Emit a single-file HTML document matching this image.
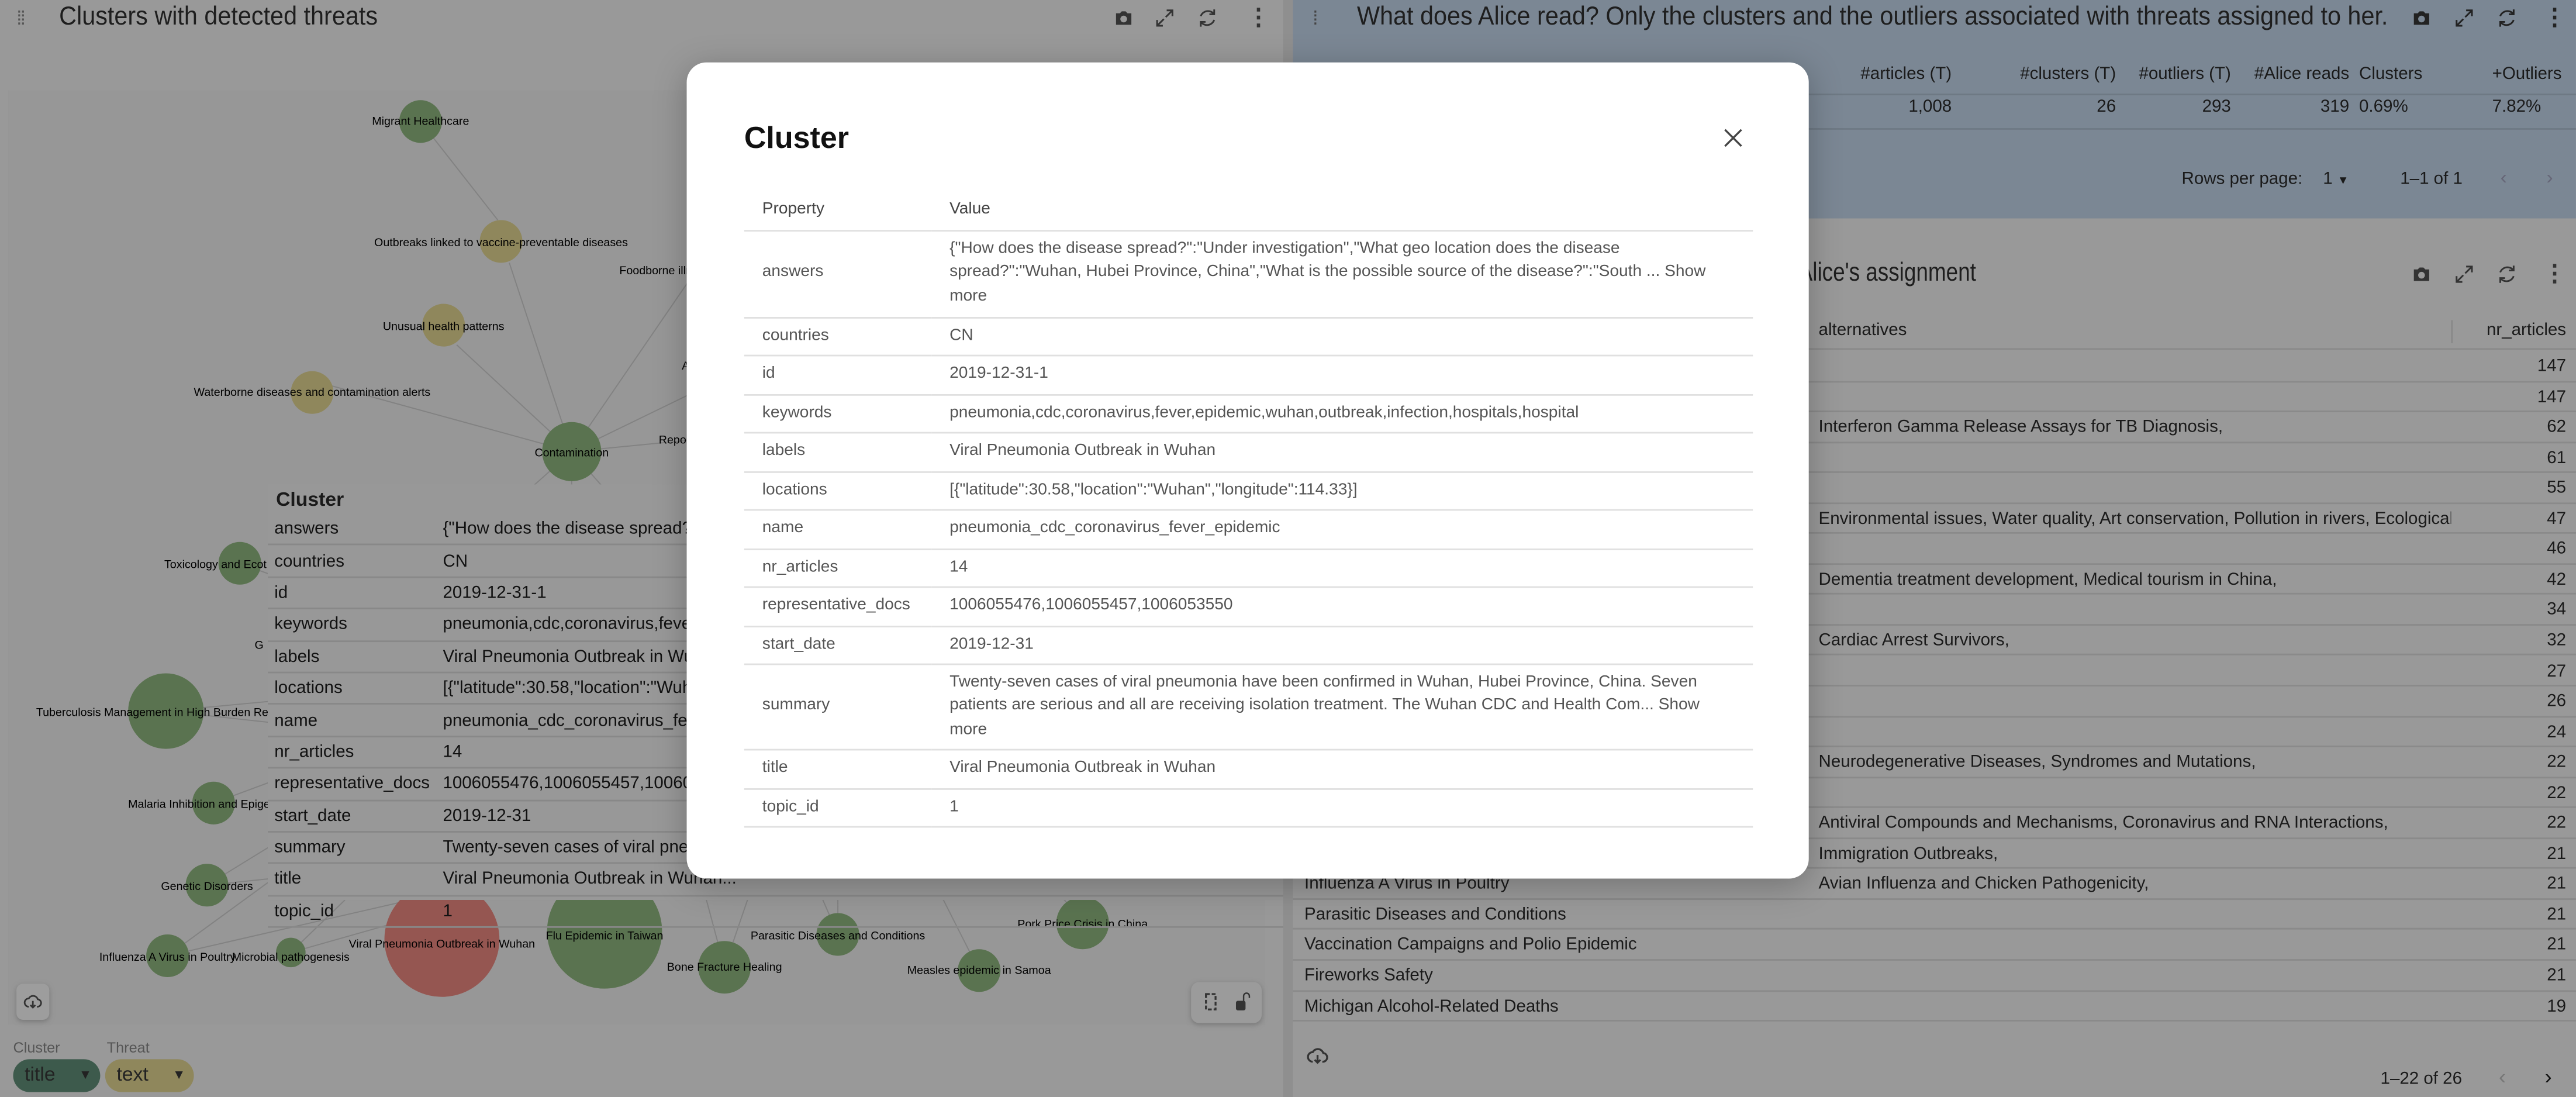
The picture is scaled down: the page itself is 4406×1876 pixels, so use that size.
<!DOCTYPE html>
<html><head><meta charset="utf-8"><style>
html,body{margin:0;padding:0;width:4406px;height:1876px;overflow:hidden;background:#999;}
#s{position:absolute;left:0;top:0;width:1568px;height:668px;transform:scale(2.8099,2.8084);transform-origin:0 0;font-family:"Liberation Sans",sans-serif;color:#1a1a1a;background:#999;overflow:hidden}
.a{position:absolute;white-space:nowrap}
.t{font-size:16px;color:#1e1e1e;transform:scaleX(0.92);transform-origin:0 0}
.ic{position:absolute;width:14px;height:14px}
.row{position:absolute;left:787px;width:781px;height:0;border-top:1px solid #8a8a8a}
.num{position:absolute;right:6px;font-size:10.5px}
.tt td{font-size:10.5px;color:#111;padding:0 4px;height:18.4px;border-bottom:1px solid #888}
.m td{font-size:10px;color:#555;border-bottom:1px solid #e0e0e0;padding:0 11px;vertical-align:middle;line-height:14.3px;white-space:normal}
</style></head><body><div id="s">
<div class="a" style="left:10px;top:4px;color:#555;font-size:12px;letter-spacing:-1px">⁞⁞</div>
<div class="a t" style="left:36px;top:2px">Clusters with detected threats</div>
<svg class="ic" style="left:677px;top:4px" viewBox="0 0 24 24"><path d="M4 7h4l2-2h4l2 2h4v12H4z" fill="#333"/><circle cx="12" cy="13" r="3.5" fill="#999"/></svg>
<svg class="ic" style="left:702px;top:4px" viewBox="0 0 24 24"><path d="M14 4h6v6M20 4l-7 7M10 20H4v-6M4 20l7-7" stroke="#333" stroke-width="1.8" fill="none"/></svg>
<svg class="ic" style="left:728px;top:4px" viewBox="0 0 24 24"><path d="M19 8a8 8 0 0 0-14 2M5 16a8 8 0 0 0 14-2M19 3v5h-5M5 21v-5h5" stroke="#333" stroke-width="1.8" fill="none"/></svg>
<div class="a" style="left:759px;top:2px;font-size:14px;color:#333;font-weight:bold">⋮</div>
<div class="a" style="left:5px;top:55px;width:765px;height:569px;background:#979797"></div>
<svg class="a" style="left:0;top:0" width="787" height="668">
<g stroke="#828282" stroke-width="0.7">
<line x1="256" y1="74" x2="303" y2="134"/><line x1="348" y1="275" x2="310" y2="160"/><line x1="348" y1="275" x2="278" y2="210"/><line x1="348" y1="275" x2="202" y2="235"/><line x1="348" y1="275" x2="420" y2="170"/><line x1="348" y1="275" x2="420" y2="240"/><line x1="348" y1="275" x2="420" y2="268"/><line x1="348" y1="275" x2="320" y2="300"/><line x1="348" y1="275" x2="370" y2="300"/><line x1="348" y1="275" x2="348" y2="300"/>
<line x1="146" y1="343" x2="165" y2="350"/><line x1="101" y1="433" x2="165" y2="427"/><line x1="101" y1="433" x2="165" y2="440"/><line x1="130" y1="489" x2="165" y2="476"/><line x1="126" y1="539" x2="165" y2="515"/><line x1="126" y1="539" x2="165" y2="535"/><line x1="102" y1="582" x2="165" y2="536"/><line x1="102" y1="582" x2="250" y2="548"/><line x1="177" y1="580" x2="210" y2="548"/><line x1="177" y1="580" x2="290" y2="548"/>
<line x1="510" y1="569" x2="480" y2="500"/><line x1="510" y1="569" x2="510" y2="500"/><line x1="596" y1="591" x2="550" y2="500"/><line x1="659" y1="562" x2="610" y2="500"/><line x1="441" y1="589" x2="430" y2="548"/><line x1="441" y1="589" x2="455" y2="548"/>
</g>
<g fill="#5a7350"><circle cx="256" cy="74" r="13"/><circle cx="348" cy="275" r="18"/><circle cx="146" cy="343" r="13"/><circle cx="101" cy="433" r="23"/><circle cx="130" cy="489" r="13"/><circle cx="126" cy="539" r="13"/><circle cx="102" cy="582" r="13"/><circle cx="177" cy="580" r="9"/><circle cx="368" cy="567" r="35"/><circle cx="441" cy="589" r="16"/><circle cx="510" cy="569" r="13"/><circle cx="596" cy="591" r="13"/><circle cx="659" cy="562" r="16"/></g>
<g fill="#8f875c"><circle cx="305" cy="147" r="13"/><circle cx="270" cy="198" r="13"/><circle cx="190" cy="239" r="13"/></g>
<circle cx="269" cy="572" r="35" fill="#955651"/>
<g font-family="Liberation Sans,sans-serif" font-size="7" fill="#000" text-anchor="middle">
<text x="256" y="76">Migrant Healthcare</text><text x="305" y="150">Outbreaks linked to vaccine-preventable diseases</text><text x="377" y="167" text-anchor="start">Foodborne illn</text><text x="270" y="201">Unusual health patterns</text><text x="190" y="241">Waterborne diseases and contamination alerts</text><text x="348" y="278">Contamination</text><text x="401" y="270" text-anchor="start">Repor</text><text x="415" y="225" text-anchor="start">A</text>
<text x="100" y="346" text-anchor="start">Toxicology and Ecot</text><text x="155" y="395" text-anchor="start">G</text><text x="22" y="436" text-anchor="start">Tuberculosis Management in High Burden Re</text><text x="78" y="492" text-anchor="start">Malaria Inhibition and Epige</text><text x="126" y="542">Genetic Disorders</text>
<text x="102" y="585">Influenza A Virus in Poultry</text><text x="177" y="585">Microbial pathogenesis</text><text x="269" y="577">Viral Pneumonia Outbreak in Wuhan</text><text x="368" y="572">Flu Epidemic in Taiwan</text><text x="441" y="591">Bone Fracture Healing</text><text x="510" y="572">Parasitic Diseases and Conditions</text><text x="596" y="593">Measles epidemic in Samoa</text><text x="659" y="565">Pork Price Crisis in China</text></g>
</svg>
<div class="a" style="left:163px;top:295px;width:620px;height:253px;background:#989898">
<div class="a" style="left:5px;top:2px;font-size:12px;font-weight:bold">Cluster</div>
<table class="tt" style="position:absolute;left:0;top:18px;border-collapse:collapse;width:620px">
<tr><td style="width:94px">answers</td><td>{"How does the disease spread?":"Under investigation"</td></tr>
<tr><td>countries</td><td>CN</td></tr><tr><td>id</td><td>2019-12-31-1</td></tr>
<tr><td>keywords</td><td>pneumonia,cdc,coronavirus,fever,epidemic</td></tr><tr><td>labels</td><td>Viral Pneumonia Outbreak in Wuhan</td></tr>
<tr><td>locations</td><td>[{"latitude":30.58,"location":"Wuhan"}]</td></tr><tr><td>name</td><td>pneumonia_cdc_coronavirus_fever_epidemic</td></tr>
<tr><td>nr_articles</td><td>14</td></tr><tr><td>representative_docs</td><td>1006055476,1006055457,1006053550</td></tr>
<tr><td>start_date</td><td>2019-12-31</td></tr><tr><td>summary</td><td>Twenty-seven cases of viral pneumonia</td></tr>
<tr><td>title</td><td>Viral Pneumonia Outbreak in Wuhan...</td></tr><tr><td>topic_id</td><td>1</td></tr></table></div>
<div class="a" style="left:10px;top:599px;width:20px;height:22px;border-radius:4px;background:#9d9d9d;box-shadow:0 1px 3px #777"></div>
<svg class="ic" style="left:14px;top:604px;width:12px;height:12px" viewBox="0 0 24 24"><path d="M7 18a5 5 0 0 1 0-10 6 6 0 0 1 11 1 4.5 4.5 0 0 1-1 9M12 11v8M9 16l3 3 3-3" stroke="#333" stroke-width="2" fill="none"/></svg>
<div class="a" style="left:725px;top:598px;width:43px;height:25px;border-radius:5px;background:#9b9b9b;box-shadow:0 1px 3px #777"></div>
<svg class="ic" style="left:730px;top:603px" viewBox="0 0 24 24"><rect x="7" y="4" width="10" height="16" stroke="#333" stroke-width="2" fill="none" stroke-dasharray="4 2"/></svg>
<svg class="ic" style="left:750px;top:603px" viewBox="0 0 24 24"><rect x="4" y="11" width="10" height="10" rx="2" fill="#333"/><path d="M12 11V6a3 3 0 0 1 6 0v2" stroke="#333" stroke-width="1.5" fill="none"/></svg>
<div class="a" style="left:8px;top:633px;font-size:9px;color:#555">Cluster</div>
<div class="a" style="left:65px;top:633px;font-size:9px;color:#555">Threat</div>
<div class="a" style="left:8px;top:645px;width:53px;height:20px;border-radius:10px;background:#3d5a4c"><span class="a" style="left:7px;top:2px;font-size:12px;color:#222">title</span><span class="a" style="left:40px;top:5px;font-size:8px;color:#222">▼</span></div>
<div class="a" style="left:64px;top:645px;width:54px;height:20px;border-radius:10px;background:#8f875c"><span class="a" style="left:7px;top:2px;font-size:12px;color:#222">text</span><span class="a" style="left:41px;top:5px;font-size:8px;color:#222">▼</span></div>
<div class="a" style="left:781px;top:0;width:6px;height:668px;background:#8f8f8f"></div>
<div class="a" style="left:787px;top:0;width:781px;height:133px;background:#7b8794"></div>
<div class="a" style="left:799px;top:4px;color:#444;font-size:12px">⁞</div>
<div class="a t" style="left:826px;top:2px">What does Alice read? Only the clusters and the outliers associated with threats assigned to her.</div>
<svg class="ic" style="left:1467px;top:4px" viewBox="0 0 24 24"><path d="M4 7h4l2-2h4l2 2h4v12H4z" fill="#222"/><circle cx="12" cy="13" r="3.5" fill="#7b8794"/></svg>
<svg class="ic" style="left:1493px;top:4px" viewBox="0 0 24 24"><path d="M14 4h6v6M20 4l-7 7M10 20H4v-6M4 20l7-7" stroke="#222" stroke-width="1.8" fill="none"/></svg>
<svg class="ic" style="left:1519px;top:4px" viewBox="0 0 24 24"><path d="M19 8a8 8 0 0 0-14 2M5 16a8 8 0 0 0 14-2M19 3v5h-5M5 21v-5h5" stroke="#222" stroke-width="1.8" fill="none"/></svg>
<div class="a" style="left:1548px;top:2px;font-size:14px;color:#222;font-weight:bold">⋮</div>
<div style="font-size:10.5px">
<span class="a" style="right:380px;top:39px">#articles (T)</span><span class="a" style="right:280px;top:39px">#clusters (T)</span><span class="a" style="right:210px;top:39px">#outliers (T)</span><span class="a" style="right:138px;top:39px">#Alice reads</span><span class="a" style="left:1436px;top:39px">Clusters</span><span class="a" style="left:1517px;top:39px">+Outliers</span>
<span class="a" style="right:380px;top:59px">1,008</span><span class="a" style="right:280px;top:59px">26</span><span class="a" style="right:210px;top:59px">293</span><span class="a" style="right:138px;top:59px">319</span><span class="a" style="left:1436px;top:59px">0.69%</span><span class="a" style="left:1517px;top:59px">7.82%</span>
<span class="a" style="left:1328px;top:103px">Rows per page:</span><span class="a" style="left:1414px;top:103px">1 <span style="font-size:7px">▼</span></span><span class="a" style="left:1461px;top:103px">1–1 of 1</span><span class="a" style="left:1522px;top:101px;color:#667;font-size:12px">‹</span><span class="a" style="left:1550px;top:101px;color:#667;font-size:12px">›</span></div>
<div class="a" style="left:787px;top:57px;width:781px;border-top:1px solid #6e7984"></div>
<div class="a" style="left:787px;top:78px;width:781px;border-top:1px solid #6e7984"></div>
<div class="a" style="right:365px;top:158px;font-size:16px;color:#1e1e1e;transform:scaleX(0.82);transform-origin:100% 0">Top clusters in Alice's assignment</div>
<svg class="ic" style="left:1467px;top:160px" viewBox="0 0 24 24"><path d="M4 7h4l2-2h4l2 2h4v12H4z" fill="#333"/><circle cx="12" cy="13" r="3.5" fill="#999"/></svg>
<svg class="ic" style="left:1493px;top:160px" viewBox="0 0 24 24"><path d="M14 4h6v6M20 4l-7 7M10 20H4v-6M4 20l7-7" stroke="#333" stroke-width="1.8" fill="none"/></svg>
<svg class="ic" style="left:1519px;top:160px" viewBox="0 0 24 24"><path d="M19 8a8 8 0 0 0-14 2M5 16a8 8 0 0 0 14-2M19 3v5h-5M5 21v-5h5" stroke="#333" stroke-width="1.8" fill="none"/></svg>
<div class="a" style="left:1548px;top:158px;font-size:14px;color:#333;font-weight:bold">⋮</div>
<div class="a" style="left:1107px;top:195px;font-size:10.5px">alternatives</div>
<div class="a" style="left:1492px;top:195px;height:14px;border-left:1px solid #888"></div>
<div class="a" style="right:6px;top:195px;font-size:10.5px">nr_articles</div>
<div class="a" style="left:795px;top:636px;width:14px;height:14px"><svg width="14" height="14" viewBox="0 0 24 24"><path d="M7 18a5 5 0 0 1 0-10 6 6 0 0 1 11 1 4.5 4.5 0 0 1-1 9M12 11v8M9 16l3 3 3-3" stroke="#333" stroke-width="2" fill="none"/></svg></div>
<div class="a" style="left:1449px;top:651px;font-size:10.5px">1–22 of 26</div>
<div class="a" style="left:1521px;top:648px;font-size:13px;color:#777">‹</div>
<div class="a" style="left:1549px;top:648px;font-size:13px;color:#111">›</div>
<div id="modal" style="position:absolute;left:418px;top:38px;width:683px;height:497px;background:#fff;border-radius:12px;box-shadow:0 4px 20px rgba(0,0,0,.25);white-space:normal">
<div class="a" style="left:35px;top:35px;font-size:18.5px;font-weight:bold;color:#111">Cluster</div>
<svg class="a" style="left:631px;top:40px" width="12" height="12" viewBox="0 0 12 12"><path d="M1 1l10 10M11 1L1 11" stroke="#444" stroke-width="1.2"/></svg>
<table class="m" style="position:absolute;left:35px;top:78px;width:614px;border-collapse:collapse;table-layout:fixed">
<tr style="height:24px"><td style="width:92px;color:#444">Property</td><td style="color:#444">Value</td></tr>
<tr style="height:53px"><td>answers</td><td style="padding-right:18px">{"How does the disease spread?":"Under investigation","What geo location does the disease spread?":"Wuhan, Hubei Province, China","What is the possible source of the disease?":"South ... Show more</td></tr>
<tr style="height:23.5px"><td>countries</td><td>CN</td></tr>
<tr style="height:23.5px"><td>id</td><td>2019-12-31-1</td></tr>
<tr style="height:23.5px"><td>keywords</td><td>pneumonia,cdc,coronavirus,fever,epidemic,wuhan,outbreak,infection,hospitals,hospital</td></tr>
<tr style="height:23.5px"><td>labels</td><td>Viral Pneumonia Outbreak in Wuhan</td></tr>
<tr style="height:23.5px"><td>locations</td><td>[{"latitude":30.58,"location":"Wuhan","longitude":114.33}]</td></tr>
<tr style="height:23.5px"><td>name</td><td>pneumonia_cdc_coronavirus_fever_epidemic</td></tr>
<tr style="height:23.5px"><td>nr_articles</td><td>14</td></tr>
<tr style="height:23.5px"><td>representative_docs</td><td>1006055476,1006055457,1006053550</td></tr>
<tr style="height:23.5px"><td>start_date</td><td>2019-12-31</td></tr>
<tr style="height:52px"><td>summary</td><td style="padding-right:22px">Twenty-seven cases of viral pneumonia have been confirmed in Wuhan, Hubei Province, China. Seven patients are serious and all are receiving isolation treatment. The Wuhan CDC and Health Com... Show more</td></tr>
<tr style="height:23.5px"><td>title</td><td>Viral Pneumonia Outbreak in Wuhan</td></tr>
<tr style="height:23.5px"><td>topic_id</td><td>1</td></tr>
</table></div>
</div>
<script>
var n=[["Contamination","",147],["Outbreaks","",147],["Tuberculosis Management","Interferon Gamma Release Assays for TB Diagnosis,",62],["Migrant Healthcare","",61],["Unusual health patterns","",55],["Waterborne diseases","Environmental issues, Water quality, Art conservation, Pollution in rivers, Ecological co",47],["Toxicology","",46],["Dementia","Dementia treatment development, Medical tourism in China,",42],["Foodborne illness","",34],["Cardiac Arrest","Cardiac Arrest Survivors,",32],["Reports","",27],["Malaria","",26],["Genetic Disorders","",24],["Neurodegenerative","Neurodegenerative Diseases, Syndromes and Mutations,",22],["Microbial pathogenesis","",22],["Antiviral","Antiviral Compounds and Mechanisms, Coronavirus and RNA Interactions,",22],["Immigration","Immigration Outbreaks,",21],["Influenza A Virus in Poultry","Avian Influenza and Chicken Pathogenicity,",21],["Parasitic Diseases and Conditions","",21],["Vaccination Campaigns and Polio Epidemic","",21],["Fireworks Safety","",21],["Michigan Alcohol-Related Deaths","",19]];
var h="",s=document.getElementById("s");
h+='<div class="row" style="top:212px"></div>';
n.forEach(function(r,i){var y=213+i*18.55;h+='<div class="a" style="left:794px;top:'+(y+4)+'px;font-size:10.5px">'+r[0]+'</div><div class="a" style="left:1107px;top:'+(y+4)+'px;font-size:10.5px;width:385px;overflow:hidden">'+r[1]+'</div><div class="num" style="top:'+(y+4)+'px">'+r[2]+'</div><div class="row" style="top:'+(y+18.5)+'px"></div>';});
var d=document.createElement("div");d.innerHTML=h;s.insertBefore(d,document.getElementById("modal"));
</script>
</body></html>
